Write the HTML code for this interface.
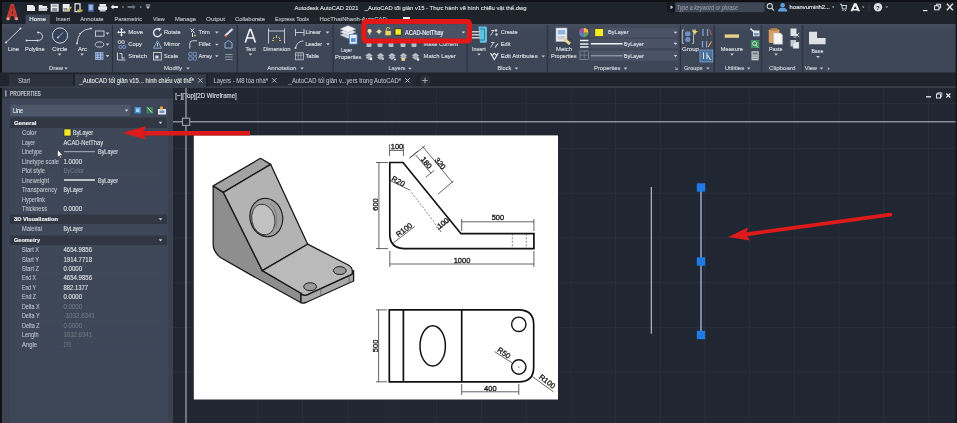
<!DOCTYPE html>
<html><head><meta charset="utf-8">
<style>
*{margin:0;padding:0}
html,body{width:957px;height:423px;overflow:hidden;background:#212832}
svg{display:block;font-family:"Liberation Sans",sans-serif;will-change:transform}
</style></head><body>
<svg width="957" height="423" viewBox="0 0 957 423">
<rect x="0" y="0" width="957" height="423" fill="#202733" />
<rect x="0" y="0" width="957" height="24" fill="#1f232b" />
<rect x="0" y="0" width="957" height="2" fill="#0e1013" />
<defs><linearGradient id="rg" x1="0" y1="0" x2="0" y2="1"><stop offset="0" stop-color="#454e5f"/><stop offset="0.14" stop-color="#3e4757"/><stop offset="1" stop-color="#3d4656"/></linearGradient></defs>
<rect x="0" y="24" width="957" height="49" fill="url(#rg)" />
<rect x="0" y="73" width="957" height="15" fill="#1f242c" />
<rect x="0" y="86" width="957" height="1.5" fill="#39404b" />
<rect x="0" y="88" width="173" height="335" fill="#3d4656" />
<rect x="0" y="0" width="2" height="423" fill="#0e1013" />
<text x="294.6" y="9.83" font-size="6.1" fill="#d9dce0" stroke="#d9dce0" stroke-width="0.16" font-weight="normal" font-style="normal" textLength="63.80" lengthAdjust="spacingAndGlyphs" >Autodesk AutoCAD 2021</text>
<text x="364.8" y="9.83" font-size="6.1" fill="#d9dce0" stroke="#d9dce0" stroke-width="0.16" font-weight="normal" font-style="normal" textLength="161.80" lengthAdjust="spacingAndGlyphs" >_AutoCAD tối giản v15 - Thực hành vẽ hình chiếu vật thể.dwg</text>
<rect x="25.5" y="14.5" width="24.5" height="9.5" fill="#3d4656" />
<text x="29.2" y="21.33" font-size="6.1" fill="#e8eaee" stroke="#e8eaee" stroke-width="0.16" font-weight="normal" font-style="normal" textLength="16.70" lengthAdjust="spacingAndGlyphs" >Home</text>
<text x="56" y="21.33" font-size="6.1" fill="#b9bdc4" stroke="#b9bdc4" stroke-width="0.16" font-weight="normal" font-style="normal" textLength="14.20" lengthAdjust="spacingAndGlyphs" >Insert</text>
<text x="80.2" y="21.33" font-size="6.1" fill="#b9bdc4" stroke="#b9bdc4" stroke-width="0.16" font-weight="normal" font-style="normal" textLength="23.40" lengthAdjust="spacingAndGlyphs" >Annotate</text>
<text x="114.5" y="21.33" font-size="6.1" fill="#b9bdc4" stroke="#b9bdc4" stroke-width="0.16" font-weight="normal" font-style="normal" textLength="27.50" lengthAdjust="spacingAndGlyphs" >Parametric</text>
<text x="153" y="21.33" font-size="6.1" fill="#b9bdc4" stroke="#b9bdc4" stroke-width="0.16" font-weight="normal" font-style="normal" textLength="11.60" lengthAdjust="spacingAndGlyphs" >View</text>
<text x="175" y="21.33" font-size="6.1" fill="#b9bdc4" stroke="#b9bdc4" stroke-width="0.16" font-weight="normal" font-style="normal" textLength="21.00" lengthAdjust="spacingAndGlyphs" >Manage</text>
<text x="206" y="21.33" font-size="6.1" fill="#b9bdc4" stroke="#b9bdc4" stroke-width="0.16" font-weight="normal" font-style="normal" textLength="19.00" lengthAdjust="spacingAndGlyphs" >Output</text>
<text x="235" y="21.33" font-size="6.1" fill="#b9bdc4" stroke="#b9bdc4" stroke-width="0.16" font-weight="normal" font-style="normal" textLength="30.00" lengthAdjust="spacingAndGlyphs" >Collaborate</text>
<text x="275" y="21.33" font-size="6.1" fill="#b9bdc4" stroke="#b9bdc4" stroke-width="0.16" font-weight="normal" font-style="normal" textLength="34.00" lengthAdjust="spacingAndGlyphs" >Express Tools</text>
<text x="319.5" y="21.33" font-size="6.1" fill="#b9bdc4" stroke="#b9bdc4" stroke-width="0.16" font-weight="normal" font-style="normal" textLength="67.30" lengthAdjust="spacingAndGlyphs" >HocThatNhanh-AutoCAD</text>
<rect x="2" y="2" width="21.5" height="21.5" fill="#1f2630" />
<defs><filter id="bl" x="-20%" y="-20%" width="140%" height="140%"><feGaussianBlur stdDeviation="0.45"/></filter></defs>
<g filter="url(#bl)"><path d="M6,20 L10.6,4 L13.8,4 L18.4,20 L14.6,20 L12.2,10.5 L9.8,20 Z" fill="#c23b30"/><path d="M10.2,13.5 L14.2,13.5 L14.8,16 L9.6,16Z" fill="#c23b30"/><path d="M11,6 L13.4,6 L12.2,10Z" fill="#a02820"/>
<ellipse cx="8" cy="18.8" rx="1.4" ry="1.5" fill="#e2a59c"/><ellipse cx="16.5" cy="18.8" rx="1.4" ry="1.5" fill="#e2a59c"/></g>
<path d="M27,5 L33,5 L35,7 L35,11 L27,11Z" fill="#e9ebee"/>
<path d="M38.7,5 L42,5 L43,6 L47,6 L47,11 L38.7,11Z" fill="#e9ebee"/><path d="M40,8 L48,8 L46.5,11 L38.7,11Z" fill="#c9ccd1"/>
<rect x="50.7" y="3.8" width="8" height="7.8" fill="#e9ebee"/><rect x="52.2" y="8" width="5" height="3.6" fill="#8a8f98"/><rect x="52" y="4.5" width="5.5" height="2.5" fill="#aab0b8"/>
<rect x="62.7" y="4" width="7" height="7.5" fill="#e9ebee"/><rect x="63.5" y="8" width="4" height="2.5" fill="#8a8f98"/><path d="M66,11 L71,6.5 L72,7.5 L67,12Z" fill="#d9b24a"/>
<rect x="75" y="3.8" width="5" height="7.8" fill="none" stroke="#e9ebee" stroke-width="1.2"/><rect x="77" y="9.5" width="5.5" height="2.2" fill="#b8b15a"/>
<rect x="88" y="3.8" width="5.8" height="8" rx="0.8" fill="#4a6fb0"/><rect x="89.2" y="5" width="3.4" height="5" fill="#9fb7e0"/>
<rect x="99.5" y="4" width="6.5" height="2.5" fill="#e9ebee"/><rect x="98.3" y="6.3" width="8.8" height="3.7" rx="1" fill="#e9ebee"/><rect x="99.8" y="9.5" width="5.8" height="2" fill="#c9ccd1"/>
<path d="M110.7,7 L113.5,4.5 L113.5,6 L118,6 L118,8 L113.5,8 L113.5,9.5Z" fill="#e9ebee"/>
<circle cx="123" cy="7" r="0.8" fill="#aab0b8"/>
<path d="M135.6,7 L132.8,4.5 L132.8,6 L127.5,6 L127.5,8 L132.8,8 L132.8,9.5Z" fill="#6c727c"/>
<circle cx="140.7" cy="7" r="0.8" fill="#aab0b8"/>
<rect x="145.8" y="4.5" width="4.4" height="1" fill="#c9ccd1"/><path d="M145.8,6.5 L150.2,6.5 L148,9Z" fill="#c9ccd1"/>
<rect x="667" y="2.4" width="10" height="9.8" rx="2" fill="#15181d"/>
<path d="M670.5,5.3 L673.2,7.3 L670.5,9.3Z" fill="#c9ccd1"/>
<rect x="675.2" y="2.4" width="89.3" height="9.8" fill="#3f4756" />
<text x="676.8" y="9.82" font-size="6.3" fill="#98a0aa" stroke="#98a0aa" stroke-width="0.08" font-weight="normal" font-style="italic" textLength="61.10" lengthAdjust="spacingAndGlyphs" >Type a keyword or phrase</text>
<circle cx="769.8" cy="6.2" r="2.6" fill="none" stroke="#c9ccd1" stroke-width="1.1"/><line x1="771.7" y1="8.1" x2="774" y2="10.6" stroke="#c9ccd1" stroke-width="1.3"/>
<circle cx="782.6" cy="5.3" r="2.3" fill="#5e9fe0"/><path d="M778,11.5 Q778,7.8 782.6,7.8 Q787.3,7.8 787.3,11.5Z" fill="#5e9fe0"/>
<text x="789.6" y="9.13" font-size="6.1" fill="#e3e5e8" stroke="#e3e5e8" stroke-width="0.16" font-weight="normal" font-style="normal" textLength="40.40" lengthAdjust="spacingAndGlyphs" >hoanvuminh2...</text>
<path d="M832,6.5 L834.4,6.5 L833.2,8Z" fill="#c9ccd1"/>
<path d="M840,4.3 L841.5,4.3 L842.5,9 L846,9 L846.5,5.5 L842,5.5" fill="none" stroke="#c9ccd1" stroke-width="1.1"/><circle cx="843" cy="10.5" r="0.7" fill="#c9ccd1"/><circle cx="845.5" cy="10.5" r="0.7" fill="#c9ccd1"/>
<path d="M854,3.3 L856.5,3.3 L860,11.2 L857.8,11.2 L855.2,6 L852.6,11.2 L850.5,11.2Z M852.5,9 L858,9 L858.5,10.5 L852,10.5Z" fill="#eceef1"/>
<path d="M862,6.5 L864.4,6.5 L863.2,8Z" fill="#c9ccd1"/>
<line x1="869" y1="3" x2="869" y2="12" stroke="#3a3f47" stroke-width="0.8" />
<circle cx="878" cy="7.3" r="4.2" fill="#d9dce0"/>
<text x="876.1" y="9.6" font-size="6" font-weight="bold" fill="#2a2e35">?</text>
<path d="M885.6,6.5 L888,6.5 L886.8,8Z" fill="#c9ccd1"/>
<line x1="923" y1="10.6" x2="927.5" y2="10.6" stroke="#e6e8eb" stroke-width="1.2" />
<rect x="934.6" y="5.8" width="4.3" height="4" fill="none" stroke="#e6e8eb" stroke-width="1"/><path d="M936.4,5.8 L936.4,4.2 L940.6,4.2 L940.6,8 L938.9,8" fill="none" stroke="#e6e8eb" stroke-width="1"/>
<path d="M946.9,3.8 L952.8,10.2 M952.8,3.8 L946.9,10.2" stroke="#e6e8eb" stroke-width="1.3"/>
<rect x="403" y="17" width="7" height="5" fill="#e9ebee"/><rect x="403" y="20" width="7" height="2" fill="#c04040"/>
<path d="M412.5,19 L414.9,19 L413.7,20.5Z" fill="#c9ccd1"/>
<line x1="112.5" y1="25" x2="112.5" y2="72.5" stroke="#2c323d" stroke-width="1.2" />
<line x1="237.4" y1="25" x2="237.4" y2="72.5" stroke="#2c323d" stroke-width="1.2" />
<line x1="333.2" y1="25" x2="333.2" y2="72.5" stroke="#2c323d" stroke-width="1.2" />
<line x1="467" y1="25" x2="467" y2="72.5" stroke="#2c323d" stroke-width="1.2" />
<line x1="547.5" y1="25" x2="547.5" y2="72.5" stroke="#2c323d" stroke-width="1.2" />
<line x1="680.4" y1="25" x2="680.4" y2="72.5" stroke="#2c323d" stroke-width="1.2" />
<line x1="714.4" y1="25" x2="714.4" y2="72.5" stroke="#2c323d" stroke-width="1.2" />
<line x1="761.5" y1="25" x2="761.5" y2="72.5" stroke="#2c323d" stroke-width="1.2" />
<line x1="802.5" y1="25" x2="802.5" y2="72.5" stroke="#2c323d" stroke-width="1.2" />
<line x1="6" y1="42.5" x2="20.5" y2="28.5" stroke="#d9dde3" stroke-width="0.9"/><circle cx="6" cy="42.5" r="1" fill="#d9dde3"/><circle cx="20.5" cy="28.5" r="1" fill="#d9dde3"/>
<text x="8" y="51.03" font-size="6.1" fill="#d9dce1" stroke="#d9dce1" stroke-width="0.16" font-weight="normal" font-style="normal" textLength="11.00" lengthAdjust="spacingAndGlyphs" >Line</text>
<path d="M26.5,40.5 L37.5,40.5 Q42.5,40.5 42.5,36.5 Q42.5,32.5 38,32.5" fill="none" stroke="#d9dde3" stroke-width="0.9"/><circle cx="26.5" cy="40.5" r="0.9" fill="#d9dde3"/><circle cx="37.5" cy="40.5" r="0.9" fill="#d9dde3"/><circle cx="38" cy="32.5" r="0.9" fill="#d9dde3"/>
<text x="25" y="51.03" font-size="6.1" fill="#d9dce1" stroke="#d9dce1" stroke-width="0.16" font-weight="normal" font-style="normal" textLength="19.50" lengthAdjust="spacingAndGlyphs" >Polyline</text>
<circle cx="60" cy="35.5" r="7.6" fill="#35405a" stroke="#c9d2e0" stroke-width="1"/><line x1="58" y1="37.5" x2="63" y2="32.5" stroke="#9fb4d6" stroke-width="1"/><circle cx="58" cy="37.5" r="0.9" fill="#d9dde3"/>
<text x="52" y="51.03" font-size="6.1" fill="#d9dce1" stroke="#d9dce1" stroke-width="0.16" font-weight="normal" font-style="normal" textLength="15.50" lengthAdjust="spacingAndGlyphs" >Circle</text>
<path d="M57.7,53.6 L61.3,53.6 L59.5,55.7Z" fill="#c9ccd1"/>
<path d="M77,43.5 Q78,29.5 91,28.5" fill="none" stroke="#d9dde3" stroke-width="0.9"/><circle cx="77" cy="43.5" r="0.9" fill="#d9dde3"/><circle cx="91" cy="28.5" r="0.9" fill="#d9dde3"/><circle cx="80" cy="33.5" r="0.8" fill="#d9dde3"/>
<text x="78" y="51.03" font-size="6.1" fill="#d9dce1" stroke="#d9dce1" stroke-width="0.16" font-weight="normal" font-style="normal" textLength="9.00" lengthAdjust="spacingAndGlyphs" >Arc</text>
<path d="M80.2,53.6 L83.8,53.6 L82,55.7Z" fill="#c9ccd1"/>
<rect x="95.5" y="31" width="8.5" height="5.2" fill="none" stroke="#d0d5dc" stroke-width="0.9"/>
<ellipse cx="99.5" cy="44.5" rx="4.2" ry="2.6" fill="none" stroke="#d0d5dc" stroke-width="0.9"/>
<rect x="95.5" y="52.5" width="7.5" height="7" fill="#5578a8" stroke="#9ab4d8" stroke-width="0.8"/><path d="M97.5,52.5 V59.5 M100.5,52.5 V59.5 M95.5,55 H103 M95.5,57.5 H103" stroke="#c8d6ea" stroke-width="0.6"/>
<path d="M105.7,32.6 L109.3,32.6 L107.5,34.7Z" fill="#c9ccd1"/>
<path d="M105.7,43.6 L109.3,43.6 L107.5,45.7Z" fill="#c9ccd1"/>
<path d="M105.7,55.1 L109.3,55.1 L107.5,57.2Z" fill="#c9ccd1"/>
<text x="49" y="70.23" font-size="6.1" fill="#cdd1d7" stroke="#cdd1d7" stroke-width="0.16" font-weight="normal" font-style="normal" textLength="14.00" lengthAdjust="spacingAndGlyphs" >Draw</text>
<path d="M64.2,67.5 L67.8,67.5 L66,69.60000000000001Z" fill="#c9ccd1"/>
<text x="128.2" y="34.13" font-size="6.1" fill="#d9dce1" stroke="#d9dce1" stroke-width="0.16" font-weight="normal" font-style="normal" textLength="15.00" lengthAdjust="spacingAndGlyphs" >Move</text>
<text x="128.2" y="46.43" font-size="6.1" fill="#d9dce1" stroke="#d9dce1" stroke-width="0.16" font-weight="normal" font-style="normal" textLength="13.80" lengthAdjust="spacingAndGlyphs" >Copy</text>
<text x="128.2" y="57.93" font-size="6.1" fill="#d9dce1" stroke="#d9dce1" stroke-width="0.16" font-weight="normal" font-style="normal" textLength="18.80" lengthAdjust="spacingAndGlyphs" >Stretch</text>
<path d="M121.5,28.5 V36 M117.8,32.3 H125.2" stroke="#e6e8eb" stroke-width="1.2"/><path d="M121.5,28 l-1.5,1.8 h3z M121.5,36.6 l-1.5,-1.8 h3z M117.2,32.3 l1.8,-1.5 v3z M125.8,32.3 l-1.8,-1.5 v3z" fill="#e6e8eb"/>
<circle cx="119.5" cy="42" r="1.5" fill="none" stroke="#d9dde3" stroke-width="0.8"/><circle cx="123" cy="42" r="1.5" fill="none" stroke="#d9dde3" stroke-width="0.8"/><circle cx="120.5" cy="47" r="1.6" fill="none" stroke="#7da6e0" stroke-width="0.9"/><circle cx="124.2" cy="47" r="1.6" fill="none" stroke="#7da6e0" stroke-width="0.9"/>
<path d="M117.5,52.5 V60 H125.5 M119.5,53.5 H122 V58 H124.5" fill="none" stroke="#d9dde3" stroke-width="0.9"/><circle cx="122.5" cy="59" r="0.9" fill="#7da6e0"/>
<text x="164" y="34.13" font-size="6.1" fill="#d9dce1" stroke="#d9dce1" stroke-width="0.16" font-weight="normal" font-style="normal" textLength="16.80" lengthAdjust="spacingAndGlyphs" >Rotate</text>
<text x="164" y="46.43" font-size="6.1" fill="#d9dce1" stroke="#d9dce1" stroke-width="0.16" font-weight="normal" font-style="normal" textLength="16.00" lengthAdjust="spacingAndGlyphs" >Mirror</text>
<text x="164" y="57.93" font-size="6.1" fill="#d9dce1" stroke="#d9dce1" stroke-width="0.16" font-weight="normal" font-style="normal" textLength="14.00" lengthAdjust="spacingAndGlyphs" >Scale</text>
<path d="M159.8,29.6 A3.9,3.9 0 1 0 161.3,33.6" fill="none" stroke="#d9dde3" stroke-width="1.5"/><path d="M157.6,27.8 L161.4,28.6 L159.4,31.6Z" fill="#d9dde3"/>
<path d="M157.5,40.8 L161.5,48.2 L153.5,48.2Z" fill="none" stroke="#8fb1e0" stroke-width="0.9"/><line x1="157.5" y1="43" x2="157.5" y2="46.5" stroke="#d9dde3" stroke-width="0.9"/>
<rect x="153.5" y="52.5" width="7.8" height="7.5" fill="none" stroke="#d0d5dc" stroke-width="0.9"/><rect x="155.3" y="55.5" width="3.3" height="3" fill="#d0d5dc"/>
<text x="198.4" y="34.13" font-size="6.1" fill="#d9dce1" stroke="#d9dce1" stroke-width="0.16" font-weight="normal" font-style="normal" textLength="11.30" lengthAdjust="spacingAndGlyphs" >Trim</text>
<text x="198.4" y="46.43" font-size="6.1" fill="#d9dce1" stroke="#d9dce1" stroke-width="0.16" font-weight="normal" font-style="normal" textLength="12.10" lengthAdjust="spacingAndGlyphs" >Fillet</text>
<text x="198.4" y="57.93" font-size="6.1" fill="#d9dce1" stroke="#d9dce1" stroke-width="0.16" font-weight="normal" font-style="normal" textLength="13.60" lengthAdjust="spacingAndGlyphs" >Array</text>
<path d="M215.0,31.6 L218.60000000000002,31.6 L216.8,33.7Z" fill="#c9ccd1"/>
<path d="M215.0,43.7 L218.60000000000002,43.7 L216.8,45.800000000000004Z" fill="#c9ccd1"/>
<path d="M215.0,55.2 L218.60000000000002,55.2 L216.8,57.300000000000004Z" fill="#c9ccd1"/>
<path d="M190.5,28.5 L194.5,33 M194,28.5 L191,32 M192.5,33 V37" stroke="#e6e8eb" stroke-width="1"/><circle cx="195" cy="35.5" r="1.1" fill="#8fd06a"/>
<path d="M189.8,48.5 V43.5 Q189.8,40.8 192.5,40.8 H197" fill="none" stroke="#d9dde3" stroke-width="0.9"/>
<g fill="#3d4656" stroke="#7fa3d6" stroke-width="0.8"><rect x="188.8" y="52.3" width="3.3" height="3.3" rx="0.6"/><rect x="193.3" y="52.3" width="3.3" height="3.3" rx="0.6"/><rect x="188.8" y="56.8" width="3.3" height="3.3" rx="0.6"/><rect x="193.3" y="56.8" width="3.3" height="3.3" rx="0.6"/></g>
<path d="M225,36 L232.5,29" stroke="#e0e2e5" stroke-width="2.2"/><path d="M224.5,36.5 L227,36" stroke="#d04a40" stroke-width="1.5"/>
<path d="M225,48 V43 L228.5,40.5 L232,43 V48Z" fill="none" stroke="#8fb1e0" stroke-width="1"/>
<path d="M225,54.5 H232.5 M225,57 H232.5 M225,59.5 H232.5" stroke="#8c94a0" stroke-width="1.2"/>
<text x="164" y="70.23" font-size="6.1" fill="#cdd1d7" stroke="#cdd1d7" stroke-width="0.16" font-weight="normal" font-style="normal" textLength="18.00" lengthAdjust="spacingAndGlyphs" >Modify</text>
<path d="M186.2,67.5 L189.8,67.5 L188,69.60000000000001Z" fill="#c9ccd1"/>
<path d="M244.4,42.4 L249.2,28.8 L251.4,28.8 L256.2,42.4 L254.4,42.4 L253.2,38.8 L247.4,38.8 L246.2,42.4Z M247.9,37.3 L252.7,37.3 L250.3,30.6Z" fill="#eef0f3" fill-rule="evenodd"/>
<text x="245.6" y="51.03" font-size="6.1" fill="#d9dce1" stroke="#d9dce1" stroke-width="0.16" font-weight="normal" font-style="normal" textLength="10.20" lengthAdjust="spacingAndGlyphs" >Text</text>
<path d="M248.7,53.6 L252.3,53.6 L250.5,55.7Z" fill="#c9ccd1"/>
<path d="M268.5,28.5 V43.5 M284.5,28.5 V43.5 M268.5,31 H284.5" stroke="#d0d5dc" stroke-width="0.9" fill="none"/><path d="M273,39 l1.5,-2 M276.5,38 v-3 M280,39 l-1.5,-2 M272,40.5 h2 M279,40.5 h2" stroke="#e8c860" stroke-width="0.9"/>
<text x="263.2" y="51.03" font-size="6.1" fill="#d9dce1" stroke="#d9dce1" stroke-width="0.16" font-weight="normal" font-style="normal" textLength="27.20" lengthAdjust="spacingAndGlyphs" >Dimension</text>
<path d="M295.5,29 V36 M304,29 V36 M295.5,32.5 H304" stroke="#d0d5dc" stroke-width="0.9"/>
<path d="M295.5,48 Q297,41 303.5,41" fill="none" stroke="#d0d5dc" stroke-width="0.9"/><circle cx="295.5" cy="48" r="1" fill="#d0d5dc"/>
<rect x="295.5" y="52.8" width="8" height="7" fill="none" stroke="#c0c6ce" stroke-width="0.8"/><path d="M298.2,52.8 V59.8 M300.9,52.8 V59.8 M295.5,55.2 H303.5" stroke="#c0c6ce" stroke-width="0.6"/>
<text x="305.4" y="34.33" font-size="6.1" fill="#d9dce1" stroke="#d9dce1" stroke-width="0.16" font-weight="normal" font-style="normal" textLength="15.60" lengthAdjust="spacingAndGlyphs" >Linear</text>
<text x="305.4" y="46.03" font-size="6.1" fill="#d9dce1" stroke="#d9dce1" stroke-width="0.16" font-weight="normal" font-style="normal" textLength="16.60" lengthAdjust="spacingAndGlyphs" >Leader</text>
<text x="305.4" y="57.93" font-size="6.1" fill="#d9dce1" stroke="#d9dce1" stroke-width="0.16" font-weight="normal" font-style="normal" textLength="13.60" lengthAdjust="spacingAndGlyphs" >Table</text>
<path d="M325.7,31.6 L329.3,31.6 L327.5,33.7Z" fill="#c9ccd1"/>
<path d="M326.2,43.300000000000004 L329.8,43.300000000000004 L328,45.400000000000006Z" fill="#c9ccd1"/>
<text x="267.3" y="70.23" font-size="6.1" fill="#cdd1d7" stroke="#cdd1d7" stroke-width="0.16" font-weight="normal" font-style="normal" textLength="29.20" lengthAdjust="spacingAndGlyphs" >Annotation</text>
<path d="M300.2,67.5 L303.8,67.5 L302,69.60000000000001Z" fill="#c9ccd1"/>
<g stroke="#9aa3b0" stroke-width="0.5"><path d="M340,35 L348,31.5 L356,35 L348,38.5Z" fill="#d7dbe1"/><path d="M340,32 L348,28.5 L356,32 L348,35.5Z" fill="#e6e9ed"/><path d="M340,29 L348,25.5 L356,29 L348,32.5Z" fill="#f2f4f6"/></g>
<rect x="349.5" y="34.5" width="7.5" height="9.5" fill="#e8f0fa" stroke="#5f8fd0" stroke-width="0.8"/><rect x="351" y="38" width="4.5" height="4" fill="#5f8fd0"/>
<text x="341" y="51.53" font-size="6.1" fill="#d9dce1" stroke="#d9dce1" stroke-width="0.16" font-weight="normal" font-style="normal" textLength="11.00" lengthAdjust="spacingAndGlyphs" >Layer</text>
<text x="335.1" y="58.83" font-size="6.1" fill="#d9dce1" stroke="#d9dce1" stroke-width="0.16" font-weight="normal" font-style="normal" textLength="26.40" lengthAdjust="spacingAndGlyphs" >Properties</text>
<rect x="366.5" y="42" width="5" height="5" rx="1" fill="#b8bec8"/>
<rect x="377.5" y="42" width="5" height="5" rx="1" fill="#b8bec8"/>
<rect x="388.5" y="42" width="5" height="5" rx="1" fill="#b8bec8"/>
<rect x="400.5" y="42" width="5" height="5" rx="1" fill="#b8bec8"/>
<rect x="411.5" y="42" width="5" height="5" rx="1" fill="#b8bec8"/>
<text x="423.6" y="46.43" font-size="6.1" fill="#d9dce1" stroke="#d9dce1" stroke-width="0.16" font-weight="normal" font-style="normal" textLength="34.40" lengthAdjust="spacingAndGlyphs" >Make Current</text>
<path d="M365.5,55.5 L369,53 L372.5,55.5 L369,58Z" fill="#c0c5cc" stroke="#8d949e" stroke-width="0.4"/><path d="M365.5,57.5 L369,55 L372.5,57.5 L369,60Z" fill="#aab0b9"/>
<path d="M377.0,55.5 L380.5,53 L384.0,55.5 L380.5,58Z" fill="#c0c5cc" stroke="#8d949e" stroke-width="0.4"/><path d="M377.0,57.5 L380.5,55 L384.0,57.5 L380.5,60Z" fill="#aab0b9"/>
<path d="M388.5,55.5 L392,53 L395.5,55.5 L392,58Z" fill="#c0c5cc" stroke="#8d949e" stroke-width="0.4"/><path d="M388.5,57.5 L392,55 L395.5,57.5 L392,60Z" fill="#aab0b9"/>
<path d="M400.0,55.5 L403.5,53 L407.0,55.5 L403.5,58Z" fill="#c0c5cc" stroke="#8d949e" stroke-width="0.4"/><path d="M400.0,57.5 L403.5,55 L407.0,57.5 L403.5,60Z" fill="#aab0b9"/>
<path d="M412.0,55.5 L415.5,53 L419.0,55.5 L415.5,58Z" fill="#c0c5cc" stroke="#8d949e" stroke-width="0.4"/><path d="M412.0,57.5 L415.5,55 L419.0,57.5 L415.5,60Z" fill="#aab0b9"/>
<circle cx="371" cy="59" r="1.3" fill="#f0f0f0"/><circle cx="383" cy="59" r="1" fill="#d8dde4"/><circle cx="395" cy="59.5" r="1.1" fill="#d8dde4"/><rect x="401.5" y="58" width="3.5" height="2.8" fill="#e8d890"/><circle cx="418" cy="59.5" r="1.3" fill="#e6e8eb"/>
<text x="423.6" y="58.33" font-size="6.1" fill="#d9dce1" stroke="#d9dce1" stroke-width="0.16" font-weight="normal" font-style="normal" textLength="32.20" lengthAdjust="spacingAndGlyphs" >Match Layer</text>
<text x="388.5" y="70.43" font-size="6.1" fill="#cdd1d7" stroke="#cdd1d7" stroke-width="0.16" font-weight="normal" font-style="normal" textLength="16.80" lengthAdjust="spacingAndGlyphs" >Layers</text>
<path d="M408.2,67.69999999999999 L411.8,67.69999999999999 L410,69.8Z" fill="#c9ccd1"/>
<rect x="366.6" y="24.6" width="100.7" height="13.9" fill="#4a5365" />
<circle cx="369.6" cy="31" r="2.1" fill="#f0e7a0"/><rect x="368.9" y="33" width="1.4" height="1.6" fill="#d0d4da"/>
<circle cx="379" cy="31.6" r="1.9" fill="#e9e3a6"/><path d="M379,28.5 V34.7 M375.9,31.6 H382.1" stroke="#e9e3a6" stroke-width="0.5"/>
<rect x="385.3" y="30.8" width="5.6" height="4.5" fill="#e8d36a"/><path d="M386.3,30.8 V29.2 Q386.3,27.5 388.1,27.5 Q389.8,27.5 389.8,29" fill="none" stroke="#e8d36a" stroke-width="0.9"/>
<rect x="395" y="28.8" width="6.3" height="6.3" fill="#f3ea2c" stroke="#1c1c1c" stroke-width="0.7"/>
<text x="405" y="34.68" font-size="6.6" fill="#e8eaee" stroke="#e8eaee" stroke-width="0.18" font-weight="normal" font-style="normal" textLength="38.40" lengthAdjust="spacingAndGlyphs" >ACAD-NetThay</text>
<path d="M461.5,31.4 L465.1,31.4 L463.3,33.5Z" fill="#d0d4da"/>
<path d="M478.5,26.6 H485.5 Q487,26.6 487,28 V41 Q487,42.7 485.3,42.7 H480 Z" fill="#5fc2df"/><path d="M480,29 H484.5 V40 H480" fill="none" stroke="#2b6f8a" stroke-width="0.8"/>
<g fill="#c8ccd3"><rect x="472" y="31" width="8" height="1.5"/><rect x="472" y="34" width="8" height="1.5"/><rect x="472" y="37" width="8" height="1.5"/></g>
<text x="471.9" y="51.03" font-size="6.1" fill="#d9dce1" stroke="#d9dce1" stroke-width="0.16" font-weight="normal" font-style="normal" textLength="13.80" lengthAdjust="spacingAndGlyphs" >Insert</text>
<path d="M477.2,53.5 L480.8,53.5 L479,55.6Z" fill="#c9ccd1"/>
<path d="M490.5,35.5 L494,30 M491,30.5 H494.5" stroke="#d0d5dc" stroke-width="0.9"/><circle cx="496" cy="30.5" r="1.3" fill="#d0d5dc"/><circle cx="496.5" cy="34.5" r="1.2" fill="#d0d5dc"/>
<path d="M490.5,47.5 L494,42 M491,42.5 H494.5" stroke="#d0d5dc" stroke-width="0.9"/><path d="M495,47.5 L498,43.5" stroke="#d0d5dc" stroke-width="1.2"/>
<path d="M490.5,53 L494.3,59.5 L498.3,53 M491.5,56 L494.3,53.3 L497.3,56" fill="none" stroke="#e0e3e7" stroke-width="1.2"/>
<text x="500.7" y="34.03" font-size="6.1" fill="#d9dce1" stroke="#d9dce1" stroke-width="0.16" font-weight="normal" font-style="normal" textLength="16.90" lengthAdjust="spacingAndGlyphs" >Create</text>
<text x="500.7" y="46.23" font-size="6.1" fill="#d9dce1" stroke="#d9dce1" stroke-width="0.16" font-weight="normal" font-style="normal" textLength="10.00" lengthAdjust="spacingAndGlyphs" >Edit</text>
<text x="500.7" y="58.13" font-size="6.1" fill="#d9dce1" stroke="#d9dce1" stroke-width="0.16" font-weight="normal" font-style="normal" textLength="37.00" lengthAdjust="spacingAndGlyphs" >Edit Attributes</text>
<path d="M541.5,55.4 L545.0999999999999,55.4 L543.3,57.5Z" fill="#c9ccd1"/>
<text x="497.6" y="70.23" font-size="6.1" fill="#cdd1d7" stroke="#cdd1d7" stroke-width="0.16" font-weight="normal" font-style="normal" textLength="13.80" lengthAdjust="spacingAndGlyphs" >Block</text>
<path d="M514.7,67.5 L518.3,67.5 L516.5,69.60000000000001Z" fill="#c9ccd1"/>
<rect x="556" y="28" width="11" height="13.5" fill="#eef1f5" stroke="#a8b0bc" stroke-width="0.6"/><rect x="557.8" y="30" width="7.4" height="4.5" fill="#8eb4e0"/><rect x="557.8" y="36" width="7.4" height="3.5" fill="#c8ccd3"/>
<path d="M564,39 L570,43.8" stroke="#e8d890" stroke-width="3"/><path d="M569,37.5 L572,40.5" stroke="#2a2e35" stroke-width="1"/>
<text x="556" y="51.03" font-size="6.1" fill="#d9dce1" stroke="#d9dce1" stroke-width="0.16" font-weight="normal" font-style="normal" textLength="16.10" lengthAdjust="spacingAndGlyphs" >Match</text>
<text x="551" y="58.33" font-size="6.1" fill="#d9dce1" stroke="#d9dce1" stroke-width="0.16" font-weight="normal" font-style="normal" textLength="25.50" lengthAdjust="spacingAndGlyphs" >Properties</text>
<circle cx="583.8" cy="32.6" r="4.6" fill="#d06040"/><path d="M583.8,32.6 L583.8,28 A4.6,4.6 0 0 1 588.4,32.6Z" fill="#e8c040"/><path d="M583.8,32.6 L588.4,32.6 A4.6,4.6 0 0 1 583.8,37.2Z" fill="#60a060"/><path d="M583.8,32.6 L583.8,37.2 A4.6,4.6 0 0 1 579.2,32.6Z" fill="#5080c0"/><path d="M583.8,32.6 L579.2,32.6 A4.6,4.6 0 0 1 583.8,28Z" fill="#a050a0"/>
<rect x="590.4" y="27.9" width="87.8" height="9.5" fill="#4a5365" />
<rect x="590.4" y="38.8" width="87.8" height="9.5" fill="#4a5365" />
<rect x="590.4" y="50.5" width="87.8" height="10.3" fill="#4a5365" />
<rect x="594.8" y="28.6" width="8.8" height="8" fill="#f3ea2c" stroke="#222" stroke-width="0.6"/>
<text x="608" y="34.43" font-size="6.1" fill="#d9dce1" stroke="#d9dce1" stroke-width="0.16" font-weight="normal" font-style="normal" textLength="20.50" lengthAdjust="spacingAndGlyphs" >ByLayer</text>
<line x1="590.8" y1="43.7" x2="622.6" y2="43.7" stroke="#f2f4f6" stroke-width="1.6" />
<text x="623.8" y="45.83" font-size="6.1" fill="#d9dce1" stroke="#d9dce1" stroke-width="0.16" font-weight="normal" font-style="normal" textLength="20.00" lengthAdjust="spacingAndGlyphs" >ByLayer</text>
<line x1="590.8" y1="55.8" x2="622.6" y2="55.8" stroke="#c0c6ce" stroke-width="0.8" />
<text x="623.8" y="57.63" font-size="6.1" fill="#d9dce1" stroke="#d9dce1" stroke-width="0.16" font-weight="normal" font-style="normal" textLength="20.00" lengthAdjust="spacingAndGlyphs" >ByLayer</text>
<path d="M673.7,31.700000000000003 L677.3,31.700000000000003 L675.5,33.800000000000004Z" fill="#d0d4da"/>
<path d="M673.7,42.800000000000004 L677.3,42.800000000000004 L675.5,44.900000000000006Z" fill="#d0d4da"/>
<path d="M673.7,54.9 L677.3,54.9 L675.5,57.0Z" fill="#d0d4da"/>
<path d="M580,40.5 H588.5 M580,44 H588.5 M580,47 H588.5" stroke="#eceef1" stroke-width="1.3"/>
<rect x="580" y="51" width="8.5" height="8.5" fill="none" stroke="#8c94a0" stroke-width="0.7"/><path d="M584.2,51 V59.5 M580,55.2 H588.5" stroke="#8c94a0" stroke-width="0.6"/>
<text x="594" y="70.33" font-size="6.1" fill="#cdd1d7" stroke="#cdd1d7" stroke-width="0.16" font-weight="normal" font-style="normal" textLength="26.40" lengthAdjust="spacingAndGlyphs" >Properties</text>
<path d="M623.7,67.6 L627.3,67.6 L625.5,69.7Z" fill="#c9ccd1"/>
<path d="M674.8,67.2 L677.2,69.6 M677.2,67.6 V69.6 H675.2" stroke="#c0c5cc" stroke-width="0.7" fill="none"/>
<path d="M684,30 H682.3 V43.3 H684 M692,30 H693.6 V43.3 H692" fill="none" stroke="#c8ccd3" stroke-width="0.9"/>
<rect x="685" y="31.5" width="5.5" height="4.5" rx="1.2" fill="#6d8fc0"/><circle cx="687.8" cy="39.5" r="2.6" fill="#6d8fc0"/>
<path d="M695,28.5 L696,31 L698.5,31.8 L696,32.6 L695,35 L694,32.6 L691.5,31.8 L694,31Z" fill="#f4d860"/>
<text x="682" y="51.33" font-size="6.1" fill="#d9dce1" stroke="#d9dce1" stroke-width="0.16" font-weight="normal" font-style="normal" textLength="17.00" lengthAdjust="spacingAndGlyphs" >Group</text>
<path d="M703,29 V36 M707.5,29 V36" stroke="#7da0d0" stroke-width="1.3"/><path d="M709.5,29.5 L711.3,35" stroke="#d06040" stroke-width="0.9"/>
<path d="M702.5,41 V47.5 M706.5,41 V47.5" stroke="#7da0d0" stroke-width="1.3"/><path d="M708,47 L711.5,41.5" stroke="#e0a050" stroke-width="1.3"/>
<rect x="699.9" y="50" width="12.8" height="12" fill="#4c6f99" stroke="#78a0d0" stroke-width="0.8"/><path d="M703.5,52.5 V59 M707,52.5 V59" stroke="#d8e4f2" stroke-width="1"/><path d="M707.5,55 L710.5,60" stroke="#f0f0f0" stroke-width="0.9"/>
<text x="683.9" y="70.13" font-size="6.1" fill="#cdd1d7" stroke="#cdd1d7" stroke-width="0.16" font-weight="normal" font-style="normal" textLength="18.60" lengthAdjust="spacingAndGlyphs" >Groups</text>
<path d="M706.1,67.39999999999999 L709.6999999999999,67.39999999999999 L707.9,69.5Z" fill="#c9ccd1"/>
<rect x="724.7" y="34.4" width="14.3" height="3.4" fill="#e6cf86" />
<text x="720.8" y="51.33" font-size="6.1" fill="#d9dce1" stroke="#d9dce1" stroke-width="0.16" font-weight="normal" font-style="normal" textLength="22.10" lengthAdjust="spacingAndGlyphs" >Measure</text>
<path d="M730.2,53.6 L733.8,53.6 L732,55.7Z" fill="#c9ccd1"/>
<rect x="753" y="30.5" width="6.5" height="5.8" fill="#dfe3e8"/><path d="M750.5,28.5 L753.5,31.5" stroke="#ffffff" stroke-width="1.3"/><rect x="754" y="33" width="4.5" height="2.5" fill="#6f95c8"/>
<rect x="750.8" y="40" width="8.5" height="8" fill="#3f8f5f"/><circle cx="754.5" cy="43.5" r="2" fill="none" stroke="#e0f0e0" stroke-width="0.8"/><path d="M755.8,45 L758,47.5" stroke="#e0f0e0" stroke-width="0.9"/>
<rect x="751.5" y="51.3" width="7.2" height="9" fill="#c8ccd3"/><rect x="752.5" y="52.5" width="5.2" height="2" fill="#6a717c"/><g fill="#6a717c"><rect x="752.5" y="55.5" width="1.2" height="1.2"/><rect x="754.5" y="55.5" width="1.2" height="1.2"/><rect x="756.5" y="55.5" width="1.2" height="1.2"/><rect x="752.5" y="57.8" width="1.2" height="1.2"/><rect x="754.5" y="57.8" width="1.2" height="1.2"/><rect x="756.5" y="57.8" width="1.2" height="1.2"/></g>
<text x="724.7" y="70.13" font-size="6.1" fill="#cdd1d7" stroke="#cdd1d7" stroke-width="0.16" font-weight="normal" font-style="normal" textLength="19.60" lengthAdjust="spacingAndGlyphs" >Utilities</text>
<path d="M746.9000000000001,67.39999999999999 L750.5,67.39999999999999 L748.7,69.5Z" fill="#c9ccd1"/>
<rect x="768.8" y="29.5" width="10.5" height="13.5" rx="0.8" fill="#d9a066"/><rect x="771" y="28.2" width="6" height="2.5" fill="#b88048"/><path d="M773.5,33 H780.5 L782.5,35 V44.2 H773.5Z" fill="#f4f4f2" stroke="#b0b4ba" stroke-width="0.5"/>
<text x="769" y="51.33" font-size="6.1" fill="#d9dce1" stroke="#d9dce1" stroke-width="0.16" font-weight="normal" font-style="normal" textLength="13.50" lengthAdjust="spacingAndGlyphs" >Paste</text>
<path d="M774.2,53.6 L777.8,53.6 L776,55.7Z" fill="#c9ccd1"/>
<rect x="790.5" y="28.5" width="6" height="7.5" fill="#dfe3e8"/><path d="M795,33 L799.3,37 M799.3,33 L795,37" stroke="#e8eaee" stroke-width="1"/><circle cx="795" cy="36.5" r="1" fill="#3d4656" stroke="#e8eaee" stroke-width="0.6"/>
<rect x="790.5" y="40" width="5.5" height="6.5" fill="#c8ccd3"/><rect x="793" y="42" width="6" height="6.5" fill="#e6e9ed" stroke="#8c94a0" stroke-width="0.4"/>
<text x="769" y="70.13" font-size="6.1" fill="#cdd1d7" stroke="#cdd1d7" stroke-width="0.16" font-weight="normal" font-style="normal" textLength="26.40" lengthAdjust="spacingAndGlyphs" >Clipboard</text>
<path d="M809,31.8 H817 V38 H825.6 V44.2 H809Z" fill="#dde0e4"/>
<text x="811.4" y="53.13" font-size="6.1" fill="#d9dce1" stroke="#d9dce1" stroke-width="0.16" font-weight="normal" font-style="normal" textLength="11.90" lengthAdjust="spacingAndGlyphs" >Base</text>
<path d="M816.2,56.1 L819.8,56.1 L818,58.2Z" fill="#c9ccd1"/>
<text x="804.7" y="70.13" font-size="6.1" fill="#cdd1d7" stroke="#cdd1d7" stroke-width="0.16" font-weight="normal" font-style="normal" textLength="12.30" lengthAdjust="spacingAndGlyphs" >View</text>
<path d="M819.7,67.39999999999999 L823.3,67.39999999999999 L821.5,69.5Z" fill="#c9ccd1"/>
<path d="M827.8,67.2 L829.8,68.6 L827.8,70Z" fill="#c0c5cc"/>
<rect x="364" y="21.5" width="105.5" height="19.5" rx="2" fill="none" stroke="#e21818" stroke-width="5"/>
<rect x="0" y="72.5" width="957" height="14.3" fill="#20252d" />
<rect x="9" y="74.3" width="64" height="12.5" fill="#2c323d" />
<rect x="75" y="74.3" width="131" height="12.5" fill="#363d4a" />
<rect x="208" y="74" width="76" height="12.8" fill="#242a33" />
<rect x="285" y="74" width="131" height="12.8" fill="#242a33" />
<text x="18.2" y="83.12" font-size="6.3" fill="#b9bec5" stroke="#b9bec5" stroke-width="0.08" font-weight="normal" font-style="normal" textLength="11.90" lengthAdjust="spacingAndGlyphs" >Start</text>
<text x="79.5" y="83.12" font-size="6.3" fill="#e6e8eb" stroke="#e6e8eb" stroke-width="0.08" font-weight="normal" font-style="normal" textLength="114.50" lengthAdjust="spacingAndGlyphs" >_AutoCAD tối giản v15... hình chiếu vật thể*</text>
<text x="213.4" y="83.12" font-size="6.3" fill="#b9bec5" stroke="#b9bec5" stroke-width="0.08" font-weight="normal" font-style="normal" textLength="54.60" lengthAdjust="spacingAndGlyphs" >Layers - M8 tòa nhà*</text>
<text x="288.6" y="83.12" font-size="6.3" fill="#b9bec5" stroke="#b9bec5" stroke-width="0.08" font-weight="normal" font-style="normal" textLength="112.40" lengthAdjust="spacingAndGlyphs" >_AutoCAD tối giản v...yers trong AutoCAD*</text>
<path d="M198.10000000000002,78.2 L202.5,82.60000000000001 M202.5,78.2 L198.10000000000002,82.60000000000001" stroke="#c0c5cc" stroke-width="0.9"/>
<path d="M272.1,78.2 L276.5,82.60000000000001 M276.5,78.2 L272.1,82.60000000000001" stroke="#c0c5cc" stroke-width="0.9"/>
<path d="M405.3,78.2 L409.7,82.60000000000001 M409.7,78.2 L405.3,82.60000000000001" stroke="#c0c5cc" stroke-width="0.9"/>
<circle cx="425" cy="80.5" r="5.5" fill="#2a303a"/><path d="M425,77.8 V83.2 M422.3,80.5 H427.7" stroke="#aeb3ba" stroke-width="0.9"/>
<rect x="0" y="86.3" width="957" height="1.6" fill="#3a414c" />
<rect x="2" y="88" width="171" height="335" fill="#3e4758" />
<rect x="2" y="98" width="8" height="325" fill="#3a4353" />
<rect x="168" y="98" width="5" height="325" fill="#3a4252" />
<rect x="2" y="88" width="171" height="10.5" fill="#313845" />
<rect x="5" y="90.5" width="1.5" height="6" fill="#9aa0a8" />
<text x="10" y="95.72" font-size="6.3" fill="#dfe2e6" stroke="#dfe2e6" stroke-width="0.08" font-weight="normal" font-style="normal" textLength="30.80" lengthAdjust="spacingAndGlyphs" >PROPERTIES</text>
<rect x="10.5" y="104.7" width="120" height="11.3" fill="#4d576a" />
<text x="13" y="113.02" font-size="7" fill="#e3e6ea" stroke="#e3e6ea" stroke-width="0.18" font-weight="normal" font-style="normal" textLength="10.00" lengthAdjust="spacingAndGlyphs" >Line</text>
<path d="M124.7,109.6 L128.3,109.6 L126.5,111.7Z" fill="#d0d4da"/>
<rect x="134.5" y="107" width="6.5" height="6.5" fill="#3f8fd0"/><rect x="136" y="108.5" width="3.5" height="3.5" fill="#a8d0f0"/>
<rect x="146.5" y="107" width="6.5" height="6.5" fill="#3a7f5a"/><path d="M147.5,107.5 L152,112.5" stroke="#d8f0d8" stroke-width="1"/>
<rect x="158" y="109" width="8" height="5.5" fill="#e8eaee"/><rect x="160" y="106.5" width="3" height="3" fill="#e8a040"/><rect x="159.5" y="110.5" width="5" height="2.5" fill="#6f95c8"/>
<rect x="10" y="117.5" width="157" height="10.5" fill="#313742" />
<text x="14" y="124.58" font-size="6.1" fill="#eef0f3" stroke="#eef0f3" stroke-width="0.16" font-weight="bold" font-style="normal" textLength="22.50" lengthAdjust="spacingAndGlyphs" >General</text>
<path d="M158.7,121.85 L162.3,121.85 L160.5,123.95Z" fill="#d0d4da"/>
<rect x="10" y="214.5" width="157" height="9.5" fill="#313742" />
<text x="14" y="221.08" font-size="6.1" fill="#eef0f3" stroke="#eef0f3" stroke-width="0.16" font-weight="bold" font-style="normal" textLength="44.00" lengthAdjust="spacingAndGlyphs" >3D Visualization</text>
<path d="M158.7,218.35 L162.3,218.35 L160.5,220.45Z" fill="#d0d4da"/>
<rect x="10" y="235.5" width="157" height="9.5" fill="#313742" />
<text x="14" y="242.08" font-size="6.1" fill="#eef0f3" stroke="#eef0f3" stroke-width="0.16" font-weight="bold" font-style="normal" textLength="26.00" lengthAdjust="spacingAndGlyphs" >Geometry</text>
<path d="M158.7,239.35 L162.3,239.35 L160.5,241.45Z" fill="#d0d4da"/>
<line x1="20" y1="137.29999999999998" x2="167" y2="137.29999999999998" stroke="#424b5b" stroke-width="0.6" />
<text x="22" y="135.12" font-size="6.3" fill="#c3c8ce" stroke="#c3c8ce" stroke-width="0.08" font-weight="normal" font-style="normal" textLength="14.50" lengthAdjust="spacingAndGlyphs" >Color</text>
<rect x="64" y="129" width="7" height="7" fill="#f3ea2c" stroke="#222" stroke-width="0.6"/>
<text x="73" y="135.12" font-size="6.3" fill="#e3e6ea" stroke="#e3e6ea" stroke-width="0.08" font-weight="normal" font-style="normal" textLength="20.00" lengthAdjust="spacingAndGlyphs" >ByLayer</text>
<line x1="20" y1="146.7" x2="167" y2="146.7" stroke="#424b5b" stroke-width="0.6" />
<text x="22" y="144.52" font-size="6.3" fill="#c3c8ce" stroke="#c3c8ce" stroke-width="0.08" font-weight="normal" font-style="normal" textLength="13.00" lengthAdjust="spacingAndGlyphs" >Layer</text>
<text x="63.5" y="144.52" font-size="6.3" fill="#e3e6ea" stroke="#e3e6ea" stroke-width="0.08" font-weight="normal" font-style="normal" textLength="39.50" lengthAdjust="spacingAndGlyphs" >ACAD-NetThay</text>
<line x1="20" y1="156.39999999999998" x2="167" y2="156.39999999999998" stroke="#424b5b" stroke-width="0.6" />
<text x="22" y="154.22" font-size="6.3" fill="#c3c8ce" stroke="#c3c8ce" stroke-width="0.08" font-weight="normal" font-style="normal" textLength="20.00" lengthAdjust="spacingAndGlyphs" >Linetype</text>
<line x1="64" y1="151.7" x2="95" y2="151.7" stroke="#c9ced5" stroke-width="0.8" />
<text x="98" y="154.22" font-size="6.3" fill="#e3e6ea" stroke="#e3e6ea" stroke-width="0.08" font-weight="normal" font-style="normal" textLength="20.00" lengthAdjust="spacingAndGlyphs" >ByLayer</text>
<line x1="20" y1="166.0" x2="167" y2="166.0" stroke="#424b5b" stroke-width="0.6" />
<text x="22" y="163.82" font-size="6.3" fill="#c3c8ce" stroke="#c3c8ce" stroke-width="0.08" font-weight="normal" font-style="normal" textLength="37.00" lengthAdjust="spacingAndGlyphs" >Linetype scale</text>
<text x="63.5" y="163.82" font-size="6.3" fill="#e3e6ea" stroke="#e3e6ea" stroke-width="0.08" font-weight="normal" font-style="normal" textLength="18.50" lengthAdjust="spacingAndGlyphs" >1.0000</text>
<line x1="20" y1="175.29999999999998" x2="167" y2="175.29999999999998" stroke="#424b5b" stroke-width="0.6" />
<text x="22" y="173.12" font-size="6.3" fill="#c3c8ce" stroke="#c3c8ce" stroke-width="0.08" font-weight="normal" font-style="normal" textLength="23.00" lengthAdjust="spacingAndGlyphs" >Plot style</text>
<text x="63.5" y="173.12" font-size="6.3" fill="#707883" stroke="#707883" stroke-width="0.08" font-weight="normal" font-style="normal" textLength="20.50" lengthAdjust="spacingAndGlyphs" >ByColor</text>
<line x1="20" y1="184.7" x2="167" y2="184.7" stroke="#424b5b" stroke-width="0.6" />
<text x="22" y="182.52" font-size="6.3" fill="#c3c8ce" stroke="#c3c8ce" stroke-width="0.08" font-weight="normal" font-style="normal" textLength="27.00" lengthAdjust="spacingAndGlyphs" >Lineweight</text>
<line x1="64" y1="180" x2="95" y2="180" stroke="#f2f4f6" stroke-width="1.4" />
<text x="98" y="182.52" font-size="6.3" fill="#e3e6ea" stroke="#e3e6ea" stroke-width="0.08" font-weight="normal" font-style="normal" textLength="20.00" lengthAdjust="spacingAndGlyphs" >ByLayer</text>
<line x1="20" y1="194.2" x2="167" y2="194.2" stroke="#424b5b" stroke-width="0.6" />
<text x="22" y="192.02" font-size="6.3" fill="#c3c8ce" stroke="#c3c8ce" stroke-width="0.08" font-weight="normal" font-style="normal" textLength="35.00" lengthAdjust="spacingAndGlyphs" >Transparency</text>
<text x="63.5" y="192.02" font-size="6.3" fill="#e3e6ea" stroke="#e3e6ea" stroke-width="0.08" font-weight="normal" font-style="normal" textLength="19.50" lengthAdjust="spacingAndGlyphs" >ByLayer</text>
<line x1="20" y1="203.7" x2="167" y2="203.7" stroke="#424b5b" stroke-width="0.6" />
<text x="22" y="201.52" font-size="6.3" fill="#c3c8ce" stroke="#c3c8ce" stroke-width="0.08" font-weight="normal" font-style="normal" textLength="23.00" lengthAdjust="spacingAndGlyphs" >Hyperlink</text>
<line x1="20" y1="213.2" x2="167" y2="213.2" stroke="#424b5b" stroke-width="0.6" />
<text x="22" y="211.02" font-size="6.3" fill="#c3c8ce" stroke="#c3c8ce" stroke-width="0.08" font-weight="normal" font-style="normal" textLength="25.00" lengthAdjust="spacingAndGlyphs" >Thickness</text>
<text x="63.5" y="211.02" font-size="6.3" fill="#e3e6ea" stroke="#e3e6ea" stroke-width="0.08" font-weight="normal" font-style="normal" textLength="18.50" lengthAdjust="spacingAndGlyphs" >0.0000</text>
<line x1="20" y1="233.39999999999998" x2="167" y2="233.39999999999998" stroke="#424b5b" stroke-width="0.6" />
<text x="22" y="231.22" font-size="6.3" fill="#c3c8ce" stroke="#c3c8ce" stroke-width="0.08" font-weight="normal" font-style="normal" textLength="20.00" lengthAdjust="spacingAndGlyphs" >Material</text>
<text x="63.5" y="231.22" font-size="6.3" fill="#e3e6ea" stroke="#e3e6ea" stroke-width="0.08" font-weight="normal" font-style="normal" textLength="19.50" lengthAdjust="spacingAndGlyphs" >ByLayer</text>
<line x1="20" y1="254.6" x2="167" y2="254.6" stroke="#424b5b" stroke-width="0.6" />
<text x="22" y="252.42" font-size="6.3" fill="#c3c8ce" stroke="#c3c8ce" stroke-width="0.08" font-weight="normal" font-style="normal" textLength="17.00" lengthAdjust="spacingAndGlyphs" >Start X</text>
<text x="63.5" y="252.42" font-size="6.3" fill="#e3e6ea" stroke="#e3e6ea" stroke-width="0.08" font-weight="normal" font-style="normal" textLength="28.50" lengthAdjust="spacingAndGlyphs" >4654.9856</text>
<line x1="20" y1="263.9" x2="167" y2="263.9" stroke="#424b5b" stroke-width="0.6" />
<text x="22" y="261.72" font-size="6.3" fill="#c3c8ce" stroke="#c3c8ce" stroke-width="0.08" font-weight="normal" font-style="normal" textLength="17.00" lengthAdjust="spacingAndGlyphs" >Start Y</text>
<text x="63.5" y="261.72" font-size="6.3" fill="#e3e6ea" stroke="#e3e6ea" stroke-width="0.08" font-weight="normal" font-style="normal" textLength="28.50" lengthAdjust="spacingAndGlyphs" >1914.7718</text>
<line x1="20" y1="273.09999999999997" x2="167" y2="273.09999999999997" stroke="#424b5b" stroke-width="0.6" />
<text x="22" y="270.92" font-size="6.3" fill="#c3c8ce" stroke="#c3c8ce" stroke-width="0.08" font-weight="normal" font-style="normal" textLength="17.00" lengthAdjust="spacingAndGlyphs" >Start Z</text>
<text x="63.5" y="270.92" font-size="6.3" fill="#e3e6ea" stroke="#e3e6ea" stroke-width="0.08" font-weight="normal" font-style="normal" textLength="18.50" lengthAdjust="spacingAndGlyphs" >0.0000</text>
<line x1="20" y1="282.59999999999997" x2="167" y2="282.59999999999997" stroke="#424b5b" stroke-width="0.6" />
<text x="22" y="280.42" font-size="6.3" fill="#c3c8ce" stroke="#c3c8ce" stroke-width="0.08" font-weight="normal" font-style="normal" textLength="14.00" lengthAdjust="spacingAndGlyphs" >End X</text>
<text x="63.5" y="280.42" font-size="6.3" fill="#e3e6ea" stroke="#e3e6ea" stroke-width="0.08" font-weight="normal" font-style="normal" textLength="28.50" lengthAdjust="spacingAndGlyphs" >4654.9856</text>
<line x1="20" y1="292.0" x2="167" y2="292.0" stroke="#424b5b" stroke-width="0.6" />
<text x="22" y="289.82" font-size="6.3" fill="#c3c8ce" stroke="#c3c8ce" stroke-width="0.08" font-weight="normal" font-style="normal" textLength="14.00" lengthAdjust="spacingAndGlyphs" >End Y</text>
<text x="63.5" y="289.82" font-size="6.3" fill="#e3e6ea" stroke="#e3e6ea" stroke-width="0.08" font-weight="normal" font-style="normal" textLength="24.50" lengthAdjust="spacingAndGlyphs" >882.1377</text>
<line x1="20" y1="301.2" x2="167" y2="301.2" stroke="#424b5b" stroke-width="0.6" />
<text x="22" y="299.02" font-size="6.3" fill="#c3c8ce" stroke="#c3c8ce" stroke-width="0.08" font-weight="normal" font-style="normal" textLength="14.00" lengthAdjust="spacingAndGlyphs" >End Z</text>
<text x="63.5" y="299.02" font-size="6.3" fill="#e3e6ea" stroke="#e3e6ea" stroke-width="0.08" font-weight="normal" font-style="normal" textLength="18.50" lengthAdjust="spacingAndGlyphs" >0.0000</text>
<line x1="20" y1="310.8" x2="167" y2="310.8" stroke="#424b5b" stroke-width="0.6" />
<text x="22" y="308.62" font-size="6.3" fill="#c3c8ce" stroke="#c3c8ce" stroke-width="0.08" font-weight="normal" font-style="normal" textLength="17.50" lengthAdjust="spacingAndGlyphs" >Delta X</text>
<text x="63.5" y="308.62" font-size="6.3" fill="#707883" stroke="#707883" stroke-width="0.08" font-weight="normal" font-style="normal" textLength="18.50" lengthAdjust="spacingAndGlyphs" >0.0000</text>
<line x1="20" y1="320.3" x2="167" y2="320.3" stroke="#424b5b" stroke-width="0.6" />
<text x="22" y="318.12" font-size="6.3" fill="#c3c8ce" stroke="#c3c8ce" stroke-width="0.08" font-weight="normal" font-style="normal" textLength="17.50" lengthAdjust="spacingAndGlyphs" >Delta Y</text>
<text x="63.5" y="318.12" font-size="6.3" fill="#707883" stroke="#707883" stroke-width="0.08" font-weight="normal" font-style="normal" textLength="31.50" lengthAdjust="spacingAndGlyphs" >-1032.6341</text>
<line x1="20" y1="329.7" x2="167" y2="329.7" stroke="#424b5b" stroke-width="0.6" />
<text x="22" y="327.52" font-size="6.3" fill="#c3c8ce" stroke="#c3c8ce" stroke-width="0.08" font-weight="normal" font-style="normal" textLength="17.50" lengthAdjust="spacingAndGlyphs" >Delta Z</text>
<text x="63.5" y="327.52" font-size="6.3" fill="#707883" stroke="#707883" stroke-width="0.08" font-weight="normal" font-style="normal" textLength="18.50" lengthAdjust="spacingAndGlyphs" >0.0000</text>
<line x1="20" y1="339.09999999999997" x2="167" y2="339.09999999999997" stroke="#424b5b" stroke-width="0.6" />
<text x="22" y="336.92" font-size="6.3" fill="#c3c8ce" stroke="#c3c8ce" stroke-width="0.08" font-weight="normal" font-style="normal" textLength="16.50" lengthAdjust="spacingAndGlyphs" >Length</text>
<text x="63.5" y="336.92" font-size="6.3" fill="#707883" stroke="#707883" stroke-width="0.08" font-weight="normal" font-style="normal" textLength="28.50" lengthAdjust="spacingAndGlyphs" >1032.6341</text>
<line x1="20" y1="348.7" x2="167" y2="348.7" stroke="#424b5b" stroke-width="0.6" />
<text x="22" y="346.52" font-size="6.3" fill="#c3c8ce" stroke="#c3c8ce" stroke-width="0.08" font-weight="normal" font-style="normal" textLength="15.00" lengthAdjust="spacingAndGlyphs" >Angle</text>
<text x="63.5" y="346.52" font-size="6.3" fill="#707883" stroke="#707883" stroke-width="0.08" font-weight="normal" font-style="normal" textLength="7.50" lengthAdjust="spacingAndGlyphs" >270</text>
<path d="M57.5,149.5 L57.5,157.5 L59.3,155.8 L60.6,158.6 L61.6,158.1 L60.4,155.4 L62.7,155.2Z" fill="#f4f4f4" stroke="#222" stroke-width="0.5"/>
<path d="M257.9,88 V423 M302.6,88 V423 M347.3,88 V423 M392.0,88 V423 M436.7,88 V423 M481.4,88 V423 M526.1,88 V423 M570.8,88 V423 M615.5,88 V423 M660.2,88 V423 M704.9,88 V423 M749.6,88 V423 M794.3,88 V423 M839.0,88 V423 M883.7,88 V423 M928.4,88 V423 M173,103.7 H957 M173,148.4 H957 M173,193.2 H957 M173,237.9 H957 M173,282.6 H957 M173,327.4 H957 M173,372.1 H957 M173,416.9 H957" stroke="#29303b" stroke-width="1"/>
<text x="175.3" y="97.63" font-size="7.3" fill="#d5d9de" stroke="#d5d9de" stroke-width="0.18" font-weight="normal" font-style="normal" textLength="61.50" lengthAdjust="spacingAndGlyphs" >[−][Top][2D Wireframe]</text>
<line x1="926" y1="96.8" x2="931" y2="96.8" stroke="#f0f2f4" stroke-width="1.3" />
<rect x="936.5" y="94" width="4" height="4" fill="none" stroke="#f0f2f4" stroke-width="0.9"/><path d="M937.8,94 V92.8 H941.8 V96.8 H940.5" fill="none" stroke="#f0f2f4" stroke-width="0.8"/>
<path d="M946.3,93.5 L950.3,97.5 M950.3,93.5 L946.3,97.5" stroke="#f0f2f4" stroke-width="1.1"/>
<line x1="173" y1="121.8" x2="957" y2="121.8" stroke="#8a909a" stroke-width="1.5" />
<line x1="186" y1="88" x2="186" y2="423" stroke="#8a909a" stroke-width="1.5" />
<rect x="182.5" y="118.2" width="7.2" height="7.2" fill="#202733" stroke="#9aa0a8" stroke-width="1.1"/>
<rect x="193.8" y="135.4" width="364.2" height="264.1" fill="#ffffff" />
<g stroke="#1a1a1a" stroke-width="1.3" stroke-linejoin="round">
<path d="M213.2,185.9 L223.4,192.4 L262.3,270.6 L301,293.3 L301,302.8 L250,274.4 L220.8,257.8 Q213.2,252 213.2,244.6 Z" fill="#8e8e8e"/>
<path d="M213.2,185.9 L260.5,158.3 L270.7,164.4 L223.4,192.4 Z" fill="#a3a3a3"/>
<path d="M223.4,192.4 L270.7,164.4 L307.7,244.2 L262.3,270.6 Z" fill="#b3b3b3"/>
<path d="M262.3,270.6 L307.7,244.2 L348.3,265 Q353.6,268 352,274.4 L306.7,295.2 Q302,296 301,293.3 Z" fill="#bababa"/>
<path d="M301,293.3 Q302,296 306.7,295.2 L352,274.4 Q353.6,272 353.6,270.6 L353.6,281 L306,302.5 Q302,303.5 301,302.8 Z" fill="#a9a9a9"/>
</g>
<path d="M320.9,288.7 V295.8 M349.2,275.7 V283" stroke="#555" stroke-width="0.7"/>
<ellipse cx="310.1" cy="286.7" rx="6.4" ry="4" fill="#9a9a9a" stroke="#1a1a1a" stroke-width="1"/>
<ellipse cx="339.8" cy="270.6" rx="6.4" ry="4" fill="#9a9a9a" stroke="#1a1a1a" stroke-width="1"/>
<ellipse cx="266.3" cy="217.5" rx="16.3" ry="19.3" transform="rotate(-12 266.3 217.5)" fill="#a0a0a0" stroke="#1a1a1a" stroke-width="1.1"/>
<ellipse cx="263.3" cy="219.5" rx="11.5" ry="15.5" transform="rotate(-12 263.3 219.5)" fill="#c2c2c2" stroke="#333" stroke-width="0.9"/>
<path d="M270,203 Q279,210 276,228" fill="none" stroke="#707070" stroke-width="0.7"/>
<path d="M389.8,162.5 H403 L461,233.7 H533.9 V248.6 H405 Q389.8,248.6 389.8,234.3 Z" fill="none" stroke="#111" stroke-width="1.7" stroke-linejoin="miter"/>
<g stroke="#222" stroke-width="0.7" fill="none">
<path d="M389.6,144.2 V156 M403.4,144.2 V156 M389.6,150.4 H403.4"/>
<path d="M376,162.5 H388 M376,248.6 H388 M378.9,162.5 V248.6"/>
<path d="M389.8,251 V267 M533.9,251 V267 M389.8,264 H533.9"/>
<path d="M461.7,219 V231 M533.9,219 V231 M461.7,221.8 H533.9"/>
<path d="M422.6,146.5 L452.6,182.6 M409.6,158 L425,145.8 M438,194.1 L453.4,181.1"/>
<path d="M415.7,155 L431.1,173.4 M409.6,158 L418,151 M425.7,177.3 L434,170.5"/>
<path d="M390,180.5 L410.3,190.3"/>
<path d="M393.3,242.9 L414.8,226.4 M437.9,229.7 L450.3,219.8 M441.2,232 L437.5,227"/>
</g>
<path d="M411.5,192.5 L433.8,221.4 L437.9,229.7 M512.3,233.7 V248.6 M526.3,233.7 V248.6" stroke="#333" stroke-width="0.6" stroke-dasharray="2,1.5" fill="none"/>
<text x="0" y="0" text-anchor="middle" font-size="7.5" fill="#111" stroke="#111" stroke-width="0.3" transform="translate(397.00,149.20) rotate(0)">100</text>
<text x="0" y="0" text-anchor="middle" font-size="7.5" fill="#111" stroke="#111" stroke-width="0.3" transform="translate(377.70,204.50) rotate(-90)">600</text>
<text x="0" y="0" text-anchor="middle" font-size="7.5" fill="#111" stroke="#111" stroke-width="0.3" transform="translate(462.00,262.70) rotate(0)">1000</text>
<text x="0" y="0" text-anchor="middle" font-size="7.5" fill="#111" stroke="#111" stroke-width="0.3" transform="translate(497.90,219.70) rotate(0)">500</text>
<text x="0" y="0" text-anchor="middle" font-size="7.5" fill="#111" stroke="#111" stroke-width="0.3" transform="translate(438.23,165.14) rotate(50)">320</text>
<text x="0" y="0" text-anchor="middle" font-size="7.5" fill="#111" stroke="#111" stroke-width="0.3" transform="translate(424.43,164.34) rotate(50)">180</text>
<text x="0" y="0" text-anchor="middle" font-size="7.5" fill="#111" stroke="#111" stroke-width="0.3" transform="translate(397.05,183.44) rotate(30)">R20</text>
<text x="0" y="0" text-anchor="middle" font-size="7.5" fill="#111" stroke="#111" stroke-width="0.3" transform="translate(405.66,231.83) rotate(-38)">R100</text>
<text x="0" y="0" text-anchor="middle" font-size="7.5" fill="#111" stroke="#111" stroke-width="0.3" transform="translate(444.56,225.23) rotate(-38)">100</text>
<path d="M389.3,309.9 H518.8 Q533.7,309.9 533.7,324.8 V366.9 Q533.7,381.8 518.8,381.8 H389.3 Z M403.4,309.9 V381.8 M461.7,309.9 V381.8" fill="none" stroke="#111" stroke-width="1.7"/>
<ellipse cx="432.7" cy="345.9" rx="12.7" ry="20.2" fill="none" stroke="#111" stroke-width="1.5"/>
<circle cx="518.8" cy="324.3" r="7.2" fill="none" stroke="#111" stroke-width="1.4"/>
<circle cx="518.8" cy="367" r="7.2" fill="none" stroke="#111" stroke-width="1.4"/><circle cx="518.8" cy="367" r="0.6" fill="#111"/>
<g stroke="#222" stroke-width="0.7" fill="none">
<path d="M376,309.9 H387 M376,381.8 H387 M378.6,309.9 V381.8"/>
<path d="M461.7,384 V395 M518.8,384 V395 M461.7,391.8 H518.8"/>
<path d="M494.5,351.6 L512,362.8 M531,375.6 L553.5,391.8"/>
</g>
<text x="0" y="0" text-anchor="middle" font-size="7.5" fill="#111" stroke="#111" stroke-width="0.3" transform="translate(377.60,345.90) rotate(-90)">500</text>
<text x="0" y="0" text-anchor="middle" font-size="7.5" fill="#111" stroke="#111" stroke-width="0.3" transform="translate(490.30,390.70) rotate(0)">400</text>
<text x="0" y="0" text-anchor="middle" font-size="7.5" fill="#111" stroke="#111" stroke-width="0.3" transform="translate(502.45,355.01) rotate(35)">R50</text>
<text x="0" y="0" text-anchor="middle" font-size="7.5" fill="#111" stroke="#111" stroke-width="0.3" transform="translate(545.64,383.43) rotate(38)">R100</text>
<line x1="651.3" y1="187" x2="651.3" y2="333.8" stroke="#c4c8ce" stroke-width="1.1" />
<line x1="701" y1="187.5" x2="701" y2="335" stroke="#a9bdd8" stroke-width="1.3" />
<rect x="696.8" y="183.3" width="8.4" height="8.4" fill="#1f7ae6"/>
<rect x="696.8" y="257.3" width="8.4" height="8.4" fill="#1f7ae6"/>
<rect x="696.8" y="330.8" width="8.4" height="8.4" fill="#1f7ae6"/>
<path d="M140,133.3 L250,133.3" stroke="#dd1a1a" stroke-width="4.4"/>
<path d="M122.5,133 L146,126 L143,133.3 L146,139.5 Z" fill="#dd1a1a"/>
<path d="M745,234.5 L890.4,214.7" stroke="#dd1a1a" stroke-width="3.8" stroke-linecap="round"/>
<path d="M728,237 L748,227.5 L746,234.5 L750,240.5 Z" fill="#dd1a1a"/>
<rect x="955.6" y="0" width="1.4" height="423" fill="#14171b" />
</svg>
</body></html>
